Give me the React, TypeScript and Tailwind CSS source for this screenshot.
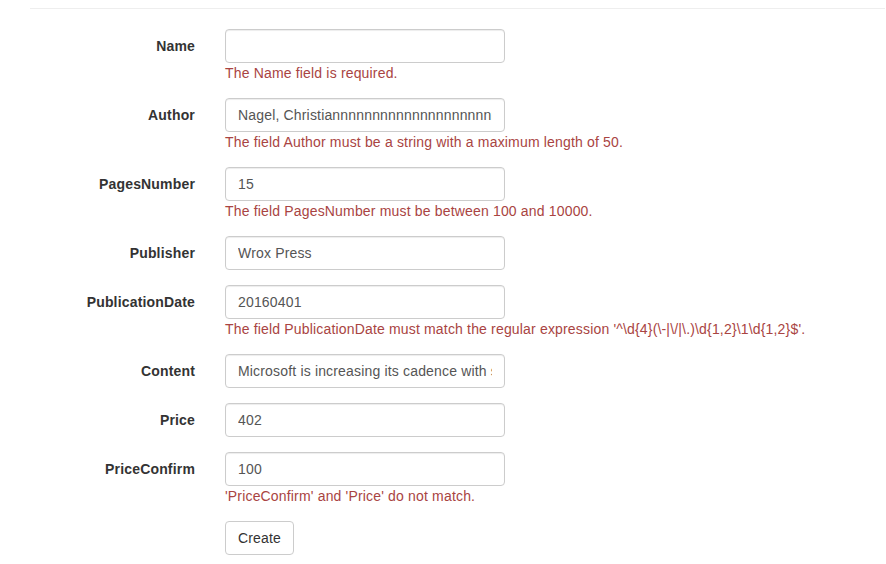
import React from "react";

type Field = { label: string; value: string; error?: string };

const fields: Field[] = [
  { label: "Name", value: "", error: "The Name field is required." },
  {
    label: "Author",
    value: "Nagel, Christiannnnnnnnnnnnnnnnnnnnnnnn",
    error: "The field Author must be a string with a maximum length of 50.",
  },
  { label: "PagesNumber", value: "15", error: "The field PagesNumber must be between 100 and 10000." },
  { label: "Publisher", value: "Wrox Press" },
  {
    label: "PublicationDate",
    value: "20160401",
    error: "The field PublicationDate must match the regular expression '^\\d{4}(\\-|\\/|\\.)\\d{1,2}\\1\\d{1,2}$'.",
  },
  {
    label: "Content",
    value: "Microsoft is increasing its cadence with such frequent releases",
  },
  { label: "Price", value: "402" },
  { label: "PriceConfirm", value: "100", error: "'PriceConfirm' and 'Price' do not match." },
];

export default function App() {
  return (
    <div
      className="w-[886px] h-[564px] bg-white overflow-hidden pl-[30px] pr-px text-[14px] leading-[20px] text-[#333] tracking-[0.17px]"
      style={{ fontFamily: '"Liberation Sans", Arial, sans-serif' }}
    >
      <div className="mt-[8px] h-px bg-[#eeeeee]" />
      <div className="pt-[20px]">
        {fields.map((f) => (
          <div key={f.label} className="flex mb-[15px]">
            <label className="w-[180px] pr-[15px] pt-[7px] text-right font-bold">{f.label}</label>
            <div className="pl-[15px]">
              <input
                readOnly
                defaultValue={f.value}
                className="block w-[280px] h-[34px] px-[12px] py-[6px] border border-[#cccccc] rounded-[4px] text-[#555555] bg-white shadow-[inset_0_1px_1px_rgba(0,0,0,0.075)] outline-none tracking-[0.17px]"
                style={{ fontFamily: '"Liberation Sans", Arial, sans-serif', fontSize: "14px" }}
              />
              {f.error && <span className="block text-[#a94442] whitespace-nowrap">{f.error}</span>}
            </div>
          </div>
        ))}
        <div className="flex">
          <div className="w-[180px]" />
          <div className="pl-[15px]">
            <button className="h-[34px] px-[12px] py-[6px] border border-[#cccccc] rounded-[4px] bg-white text-[#333] tracking-[0.17px]">
              Create
            </button>
          </div>
        </div>
      </div>
    </div>
  );
}
